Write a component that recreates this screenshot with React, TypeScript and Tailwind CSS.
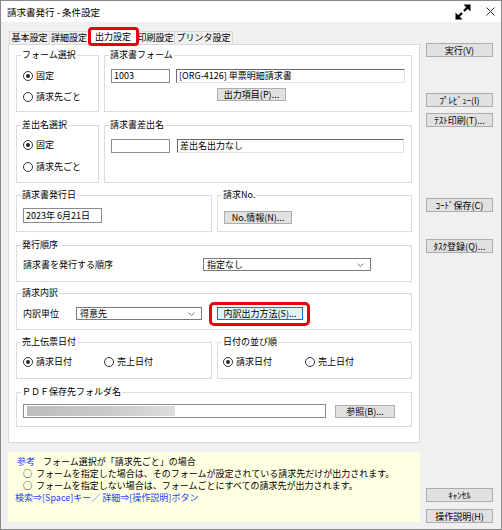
import React from 'react';

const Group: React.FC<{ label: string; className?: string; children?: React.ReactNode }> = ({
  label,
  className = '',
  children,
}) => (
  <fieldset className={`border border-[#dcdcdc] min-w-0 ${className}`}>
    <legend className="ml-[4px] px-[1px] leading-[12px]">{label}</legend>
    {children}
  </fieldset>
);

const Radio: React.FC<{ label: string; checked?: boolean; className?: string }> = ({ label, checked, className = '' }) => (
  <span className={`flex items-center ${className}`}>
    <span className="w-[10px] h-[10px] rounded-full border border-[#333] bg-white flex items-center justify-center shrink-0">
      {checked && <span className="w-[4px] h-[4px] rounded-full bg-[#222]" />}
    </span>
    <span className="ml-[3px]">{label}</span>
  </span>
);

const Btn: React.FC<{ children: React.ReactNode; className?: string }> = ({ children, className = '' }) => (
  <button
    type="button"
    className={`h-[13px] bg-[#e1e1e1] border border-[#adadad] flex items-center justify-center leading-none whitespace-nowrap ${className}`}
  >
    {children}
  </button>
);

const Box: React.FC<{ value?: string; sunken?: boolean; className?: string }> = ({ value = '', sunken, className = '' }) => (
  <div
    className={`h-[14px] bg-white flex items-center px-[2px] whitespace-nowrap ${
      sunken ? 'border border-t-[#6a6a6a] border-l-[#6a6a6a] border-r-[#e3e3e3] border-b-[#e3e3e3]' : 'border border-[#8c8c8c]'
    } ${className}`}
  >
    {value}
  </div>
);

const Select: React.FC<{ value: string; className?: string }> = ({ value, className = '' }) => (
  <div className={`h-[13px] bg-white border border-[#7a7a7a] flex items-center pl-[3px] pr-[6px] ${className}`}>
    <span className="flex-1">{value}</span>
    <svg width="7" height="4" viewBox="0 0 7 4">
      <path d="M0.5 0.5 L3.5 3.5 L6.5 0.5" fill="none" stroke="#777" strokeWidth="1" />
    </svg>
  </div>
);

const tabs = [
  { label: '基本設定', w: 'w-[41px]' },
  { label: '詳細設定', w: 'w-[39px]' },
  { label: '出力設定', w: 'w-[48px]', active: true },
  { label: '印刷設定', w: 'w-[38px]' },
  { label: 'プリンタ設定', w: 'w-[58px]' },
];

export default function App() {
  return (
    <div className="w-[502px] h-[530px] bg-[#f0f0f0] border border-[#8a8a8a] flex flex-col overflow-hidden font-['Noto_Sans_CJK_JP','Noto_Sans',sans-serif] text-[9px] leading-[12px] text-black">
      {/* title bar */}
      <div className="h-[21px] bg-white flex items-center pl-[6px] shrink-0">
        <span className="text-[9.5px]">請求書発行 - 条件設定</span>
        <svg className="ml-auto" width="18" height="18" viewBox="0 0 18 18">
          <path d="M10 8 L14.5 3.5" stroke="#000" strokeWidth="2.4" />
          <path d="M9.5 1.5 L16.5 1.5 L16.5 8.5 Z" fill="#000" />
          <path d="M8 10 L3.5 14.5" stroke="#000" strokeWidth="2.4" />
          <path d="M1.5 9.5 L1.5 16.5 L8.5 16.5 Z" fill="#000" />
        </svg>
        <svg className="ml-[14px] mr-[6px]" width="9" height="9" viewBox="0 0 9 9">
          <path d="M0.5 0.5 L8.5 8.5 M8.5 0.5 L0.5 8.5" stroke="#333" strokeWidth="1" />
        </svg>
      </div>

      <div className="flex flex-1 min-h-0">
        {/* left column */}
        <div className="ml-[7px] w-[412px] flex flex-col">
          {/* tabs */}
          <div className="mt-[6px] h-[16px] flex items-end pl-[1px] relative z-10">
            {tabs.map((t, i) =>
              t.active ? (
                <div key={t.label} className={`relative ${t.w} h-[17px] -mb-[1px] bg-white border border-b-0 border-[#d9d9d9] flex items-center justify-center`}>
                  {t.label}
                  <div className="absolute -left-[2px] -top-[2px] -right-[3px] -bottom-[1px] border-[3px] border-[#e60012] rounded-[4px]" />
                </div>
              ) : (
                <div
                  key={t.label}
                  className={`${t.w} h-[13px] bg-[#f0f0f0] border-t border-r border-[#d9d9d9] ${i === 0 ? 'border-l' : ''} flex items-center justify-center`}
                >
                  {t.label}
                </div>
              )
            )}
          </div>

          {/* panel */}
          <div className="h-[399px] bg-white border border-[#d9d9d9] px-[7px] pt-[4px] flex flex-col">
            {/* row 1 */}
            <div className="flex gap-[5px]">
              <Group label="フォーム選択" className="w-[83px] h-[63px]">
                <div className="pl-[6px] mt-[9px] flex flex-col gap-[9px]">
                  <Radio label="固定" checked />
                  <Radio label="請求先ごと" />
                </div>
              </Group>
              <Group label="請求書フォーム" className="flex-1 h-[63px]">
                <div className="pl-[6px] mt-[8px] flex">
                  <Box value="1003" className="w-[59px]" />
                  <Box value="[ORG-4126] 単票明細請求書" sunken className="ml-[6px] w-[229px]" />
                </div>
                <Btn className="ml-[112px] mt-[5px] w-[69px]">出力項目(P)...</Btn>
              </Group>
            </div>

            {/* row 2 */}
            <div className="flex gap-[5px] mt-[7px]">
              <Group label="差出名選択" className="w-[83px] h-[64px]">
                <div className="pl-[6px] mt-[8px] flex flex-col gap-[10px]">
                  <Radio label="固定" checked />
                  <Radio label="請求先ごと" />
                </div>
              </Group>
              <Group label="請求書差出名" className="flex-1 h-[64px]">
                <div className="pl-[6px] mt-[8px] flex">
                  <Box className="w-[59px]" />
                  <Box value="差出名出力なし" sunken className="ml-[7px] w-[227px]" />
                </div>
              </Group>
            </div>

            {/* row 3 */}
            <div className="flex gap-[5px] mt-[6px]">
              <Group label="請求書発行日" className="w-[196px] h-[43px]">
                <Box value="2023年 6月21日" className="ml-[6px] mt-[7px] w-[79px] h-[15px]" />
              </Group>
              <Group label="請求No." className="flex-1 h-[43px]">
                <Btn className="ml-[6px] mt-[10px] w-[68px] h-[12px]">No.情報(N)...</Btn>
              </Group>
            </div>

            {/* row 4 */}
            <Group label="発行順序" className="h-[43px] mt-[7px]">
              <div className="pl-[6px] mt-[7px] flex items-center">
                <span className="w-[180px]">請求書を発行する順序</span>
                <Select value="指定なし" className="w-[168px]" />
              </div>
            </Group>

            {/* row 5 */}
            <Group label="請求内訳" className="h-[43px] mt-[5px]">
              <div className="pl-[6px] mt-[8px] flex items-center">
                <span className="w-[53px]">内訳単位</span>
                <Select value="得意先" className="w-[126px]" />
                <div className="relative ml-[15px]">
                  <button
                    type="button"
                    className="h-[13px] w-[86px] bg-[#e5f1fb] border border-[#0078d7] flex items-center justify-center leading-none whitespace-nowrap"
                  >
                    内訳出力方法(S)...
                  </button>
                  <div className="absolute -left-[8px] -top-[5px] -right-[7px] -bottom-[6px] border-[3px] border-[#e60012] rounded-[5px]" />
                </div>
              </div>
            </Group>

            {/* row 6 */}
            <div className="flex gap-[5px] mt-[6px]">
              <Group label="売上伝票日付" className="w-[196px] h-[43px]">
                <div className="pl-[6px] mt-[8px] flex">
                  <Radio label="請求日付" checked className="w-[81px]" />
                  <Radio label="売上日付" />
                </div>
              </Group>
              <Group label="日付の並び順" className="flex-1 h-[43px]">
                <div className="pl-[5px] mt-[8px] flex">
                  <Radio label="請求日付" checked className="w-[82px]" />
                  <Radio label="売上日付" />
                </div>
              </Group>
            </div>

            {/* row 7 */}
            <Group label="ＰＤＦ保存先フォルダ名" className="h-[41px] mt-[7px]">
              <div className="pl-[6px] mt-[6px] flex items-center">
                <div className="w-[303px] h-[14px] bg-white border border-[#8c8c8c] flex items-stretch py-[1px] pl-[3px]">
                  <div className="w-[148px] bg-linear-to-r from-[#bdbdbd] via-[#c9c9c9] to-[#dddddd]" />
                </div>
                <Btn className="ml-[9px] w-[60px]">参照(B)...</Btn>
              </div>
            </Group>
          </div>

          {/* note */}
          <div className="mt-[9px] h-[70px] bg-[#ffffe1] pt-[4px] leading-[12px]">
            <div className="pl-[9px] flex">
              <span className="text-[#1f3fff]">参考</span>
              <span className="ml-[8px]">フォーム選択が「請求先ごと」の場合</span>
            </div>
            <div className="pl-[15px] flex">
              <span>○</span>
              <span className="ml-[4px]">フォームを指定した場合は、そのフォームが設定されている請求先だけが出力されます。</span>
            </div>
            <div className="pl-[15px] flex">
              <span>○</span>
              <span className="ml-[4px]">フォームを指定しない場合は、フォームごとにすべての請求先が出力されます。</span>
            </div>
            <div className="pl-[7px] text-[#1f3fff]">検索⇒[Space]キー／ 詳細⇒[操作説明]ボタン</div>
          </div>
        </div>

        {/* right column */}
        <div className="ml-[6px] w-[67px] flex flex-col">
          <Btn className="mt-[21px] h-[14px]">実行(V)</Btn>
          <Btn className="mt-[36px] h-[14px]">ﾌﾟﾚﾋﾞｭｰ(I)</Btn>
          <Btn className="mt-[6px] h-[14px]">ﾃｽﾄ印刷(T)...</Btn>
          <Btn className="mt-[71px] h-[14px]">ｺｰﾄﾞ保存(C)</Btn>
          <Btn className="mt-[27px] h-[14px]">ﾀｽｸ登録(Q)...</Btn>
          <Btn className="mt-auto h-[14px]">ｷｬﾝｾﾙ</Btn>
          <Btn className="mt-[7px] mb-[6px] h-[14px]">操作説明(H)</Btn>
        </div>
      </div>
    </div>
  );
}
